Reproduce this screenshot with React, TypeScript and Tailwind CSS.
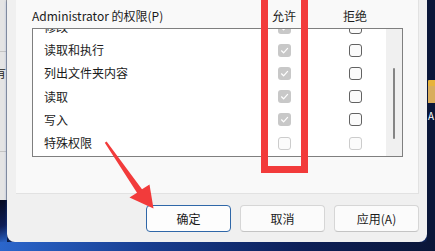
import React from "react";

const FONT = '"Segoe UI", "Noto Sans CJK SC", "Noto Sans", sans-serif';

function Box({ kind }: { kind: "checked" | "empty" | "emptyDisabled" }) {
  if (kind === "checked") {
    return (
      <div className="w-[13px] h-[13px] rounded-[3px] bg-[#c8c8c8] flex items-center justify-center">
        <svg width="9" height="9" viewBox="0 0 9 9">
          <path d="M1.5 4.8 L3.6 6.8 L7.6 2.4" fill="none" stroke="#ffffff" strokeWidth="1.2" strokeLinecap="round" strokeLinejoin="round" />
        </svg>
      </div>
    );
  }
  if (kind === "empty") {
    return <div className="w-[13px] h-[13px] rounded-[3px] bg-[#fbfbfb] border border-[#626262]" />;
  }
  return <div className="w-[13px] h-[13px] rounded-[3px] bg-[#fbfbfb] border border-[#cccccc]" />;
}

const rows: { name: string; allow: "checked" | "empty" | "emptyDisabled"; deny: "checked" | "empty" | "emptyDisabled" }[] = [
  { name: "修改", allow: "checked", deny: "empty" },
  { name: "读取和执行", allow: "checked", deny: "empty" },
  { name: "列出文件夹内容", allow: "checked", deny: "empty" },
  { name: "读取", allow: "checked", deny: "empty" },
  { name: "写入", allow: "checked", deny: "empty" },
  { name: "特殊权限", allow: "emptyDisabled", deny: "emptyDisabled" },
];

export default function App() {
  return (
    <div
      className="w-[435px] h-[251px] relative overflow-hidden bg-[#0b1638] flex flex-col text-[#1b1b1b]"
      style={{ fontFamily: FONT }}
    >
      <div className="flex h-[242px]">
        {/* background window strip on the left */}
        <div className="w-[7px] flex flex-col">
          <div className="h-[200px] bg-[#e4e4e4] border-r border-[#9a9a9a] flex flex-col overflow-hidden">
            <div className="h-[52px] border-b border-[#c4c4c4]" />
            <div className="mt-[14px] -ml-[6px] text-[12px] leading-[13px] whitespace-nowrap">有</div>
            <div className="h-[73px] border-b border-[#c4c4c4]" />
          </div>
          <div className="flex-1 bg-[linear-gradient(160deg,#050a20_0%,#0d1d55_60%,#2a64c8_100%)]" />
        </div>

        {/* dialog */}
        <div className="w-[420px] h-[242px] bg-[#f0f0f0] rounded-b-[8px] flex flex-col shadow-[0_1px_3px_rgba(30,80,180,0.6)]">
          <div className="ml-[9px] w-[403px] h-[194px] bg-[#f9f9f9] border-r border-b border-[#e2e2e2] pl-[16px] flex flex-col">
            {/* header */}
            <div className="w-[371px] h-[28px] pt-[3px] flex items-center text-[12px] px-[1px]">
              <span className="flex-1 -ml-[1px] whitespace-nowrap">Administrator 的权限(P)</span>
              <span className="w-[50px] text-center">允许</span>
              <span className="w-[21px]" />
              <span className="w-[50px] text-center">拒绝</span>
              <span className="w-[22px]" />
            </div>
            {/* list box */}
            <div className="w-[371px] h-[129px] border border-[#7f7f7f] bg-white flex">
              <div className="flex-1 overflow-hidden">
                <div className="-mt-[13.5px] flex flex-col">
                  {rows.map((r) => (
                    <div key={r.name} className="h-[23.2px] flex items-center text-[12px]">
                      <span className="flex-1 pl-[11px] whitespace-nowrap">{r.name}</span>
                      <div className="w-[50px] flex justify-center">
                        <Box kind={r.allow} />
                      </div>
                      <div className="w-[21px]" />
                      <div className="w-[50px] flex justify-center">
                        <Box kind={r.deny} />
                      </div>
                      <div className="w-[6px]" />
                    </div>
                  ))}
                </div>
              </div>
              <div className="w-[16px] bg-[#f0f0f0] flex flex-col items-center">
                <div className="mt-[39px] h-[71px] w-[2px] rounded-full bg-[#858585]" />
              </div>
            </div>
          </div>
          {/* footer */}
          <div className="flex justify-end gap-[9px] pr-[8px] pt-[11px] text-[12px]">
            <button className="w-[85px] h-[27px] rounded-[4px] bg-[#fdfdfd] border border-[#2f67a8] flex items-center justify-center">
              确定
            </button>
            <button className="w-[85px] h-[27px] rounded-[4px] bg-[#fbfbfb] border border-[#d6d6d6] border-b-[#c4c4c4] flex items-center justify-center">
              取消
            </button>
            <button className="w-[85px] h-[27px] rounded-[4px] bg-[#fbfbfb] border border-[#d6d6d6] border-b-[#c4c4c4] flex items-center justify-center">
              应用(A)
            </button>
          </div>
        </div>

        {/* desktop on the right */}
        <div className="flex-1 flex flex-col overflow-hidden pl-[1px] bg-[#0a1638]">
          <svg className="mt-[80px] shrink-0" width="30" height="24" viewBox="0 0 30 24">
            <path d="M0 1 Q0 0 1 0 L10 0 L13 3 L29 3 Q30 3 30 4 L30 23 L0 23 Z" fill="#e7b33c" />
            <path d="M0 6 L30 6 L30 23 L0 23 Z" fill="#d9ad5c" />
          </svg>
          <span className="mt-[6px] text-[10px] leading-[12px] text-white whitespace-nowrap">A</span>
        </div>
      </div>
      <div className="flex-1 bg-[linear-gradient(90deg,#2b66cc_0%,#173c8e_35%,#0d1f57_70%,#0a1638_100%)]" />

      {/* red highlight box */}
      <div className="absolute left-[261px] top-[-10px] w-[47px] h-[183px] border-[7px] border-[#f23b3b]" />

      {/* red arrow */}
      <svg className="absolute left-0 top-0" width="435" height="251" viewBox="0 0 435 251">
        <polygon
          points="104.8,142.8 106.6,141.6 142,189.3 149.5,184.5 153.5,208.5 129.5,197.5 137,192.7"
          fill="#f23b3b"
        />
      </svg>
    </div>
  );
}
